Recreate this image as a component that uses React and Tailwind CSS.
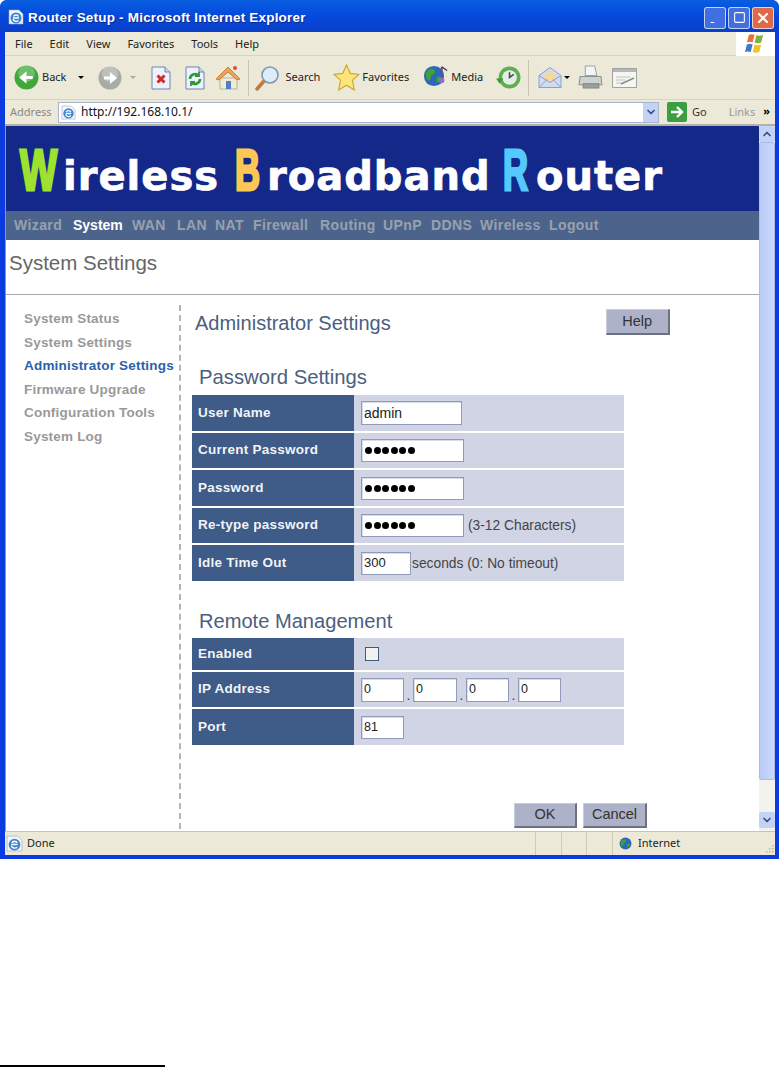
import { ChevronUp, ChevronDown, Minus, Square, X } from 'lucide-react';

const sideLinks = ['System Status', 'System Settings', 'Administrator Settings', 'Firmware Upgrade', 'Configuration Tools', 'System Log'];
const navLinks = [
  ['Wizard', 'w-[59px]'],
  ['System', 'w-[59px]'],
  ['WAN', 'w-[45px]'],
  ['LAN', 'w-[38px]'],
  ['NAT', 'w-[38px]'],
  ['Firewall', 'w-[67px]'],
  ['Routing', 'w-[63px]'],
  ['UPnP', 'w-[48px]'],
  ['DDNS', 'w-[49px]'],
  ['Wireless', 'w-[69px]'],
  ['Logout', 'w-[60px]'],
];

function BackIcon({ disabled }) {
  const fill = disabled ? '#a9aba5' : '#3fa83a';
  const size = disabled ? 'w-[24px] h-[24px]' : 'w-[25px] h-[25px]';
  return (
    <svg viewBox="0 0 24 24" className={size}>
      <circle cx="12" cy="12" r="11.5" fill={fill} />
      <circle cx="12" cy="8" r="8" fill="#fff" opacity="0.25" />
      {disabled ? (
        <path d="M6 10.5h6V6l7 6-7 6v-4.5H6z" fill="#fff" />
      ) : (
        <path d="M18 10.5h-6V6l-7 6 7 6v-4.5h6z" fill="#fff" />
      )}
    </svg>
  );
}

function PageIcon({ refresh }) {
  return (
    <svg viewBox="0 0 20 24" className="w-[20px] h-[24px]">
      <path d="M1 1h13l5 5v17H1z" fill="#eef2fb" stroke="#6c83b5" />
      <path d="M14 1v5h5" fill="#c9d6ee" stroke="#6c83b5" />
      {refresh ? (
        <g fill="none" stroke="#2c9a36" strokeWidth="2.6">
          <path d="M5 13a5 5 0 0 1 8.5-3.5" />
          <path d="M15 13a5 5 0 0 1-8.5 3.5" />
          <path d="M14 6v4h-4M6 20v-4h4" strokeWidth="1.8" />
        </g>
      ) : (
        <path d="M6.5 9.5l7 7m0-7l-7 7" stroke="#d8262a" strokeWidth="3" />
      )}
    </svg>
  );
}

function HomeIcon() {
  return (
    <svg viewBox="0 0 26 26" className="w-[26px] h-[26px]">
      <path d="M5 13h17v11H5z" fill="#f1ead4" stroke="#b9b39a" />
      <path d="M1 14L13 2l12 12-3 1-9-8-9 8z" fill="#e9a35b" stroke="#c87f3a" />
      <path d="M11 16h5v8h-5z" fill="#4f7fc4" />
      <circle cx="20" cy="3" r="2" fill="#d8512f" />
    </svg>
  );
}

function SearchIcon() {
  return (
    <svg viewBox="0 0 26 26" className="w-[26px] h-[26px]">
      <path d="M3 24l7-8" stroke="#c2793a" strokeWidth="3.5" strokeLinecap="round" />
      <circle cx="16" cy="10" r="8" fill="#dcecf8" stroke="#7f97b4" strokeWidth="1.6" />
    </svg>
  );
}

function StarIcon() {
  return (
    <svg viewBox="0 0 26 26" className="w-[27px] h-[27px]">
      <path d="M13 1l3.6 8 8.4 1-6.2 5.6L20.500 25 13 20.500 5.500 25l1.700-9.400L1 10l8.400-1z" fill="#fde57a" stroke="#c9a63a" strokeWidth="1.100" />
    </svg>
  );
}

function GlobeIcon({ className }) {
  return (
    <svg viewBox="0 0 24 24" className={className}>
      <circle cx="12" cy="12" r="11" fill="#2a68b8" />
      <path d="M5 6c3-3 7-2 8 0s-1 4-3 5-1 5-3 6-4-3-4-6 0-3 2-5zM16 13c2-1 5 0 5 1s-3 6-5 5-2-5 0-6z" fill="#3f9f3a" />
    </svg>
  );
}

function MediaIcon() {
  return (
    <div className="relative w-[25px] h-[25px]">
      <GlobeIcon className="w-[22px] h-[22px]" />
      <svg viewBox="0 0 10 20" className="absolute right-0 top-0 w-[9px] h-[20px]">
        <path d="M3 1v13" stroke="#6a4aa0" strokeWidth="2" />
        <path d="M3 1l6 4" stroke="#3a3a50" strokeWidth="1.500" />
        <circle cx="3" cy="16" r="3" fill="#8f70c8" />
      </svg>
    </div>
  );
}

function HistoryIcon() {
  return (
    <svg viewBox="0 0 24 24" className="w-[25px] h-[25px]">
      <circle cx="13" cy="12" r="10.500" fill="#5fae52" />
      <circle cx="13" cy="12" r="7" fill="#e3eee4" />
      <path d="M13 7v5l4-3" stroke="#3c4a40" strokeWidth="1.500" fill="none" />
      <path d="M0 13h7l-3.500 5z" fill="#3a9a3a" />
    </svg>
  );
}

function MailIcon() {
  return (
    <svg viewBox="0 0 24 22" className="w-[24px] h-[23px]">
      <path d="M1 9l11-8 11 8v12H1z" fill="#cfdcf3" stroke="#8aa2c8" />
      <path d="M6 9l6-5 6 5v4l-6 3-6-3z" fill="#f4d99a" />
      <path d="M1 9l11 7 11-7M1 21l8-8m14 8l-8-8" fill="none" stroke="#8aa2c8" />
    </svg>
  );
}

function PrintIcon() {
  return (
    <svg viewBox="0 0 24 24" className="w-[25px] h-[25px]">
      <path d="M7 1h9l2 9H7z" fill="#f3f5f8" stroke="#9aa6b0" />
      <path d="M2 11h20l1 8H1z" fill="#cfd3cf" stroke="#8c938f" />
      <path d="M5 18h15v4H5z" fill="#9ba29d" stroke="#7e8681" />
    </svg>
  );
}

function EditIcon() {
  return (
    <svg viewBox="0 0 25 20" className="w-[25px] h-[20px]">
      <path d="M0.500 0.500h24v19h-24z" fill="#f5f5f2" stroke="#9ea49d" />
      <path d="M1 1h23v3H1z" fill="#b3b8b2" />
      <path d="M4 9h14M4 12h9M4 15h6" stroke="#c0c4bd" />
      <path d="M9 16l13-6" stroke="#888f88" strokeWidth="1.500" />
    </svg>
  );
}

function IeIcon({ className }) {
  return (
    <svg viewBox="0 0 16 16" className={className}>
      <path d="M1 1h10l4 4v10H1z" fill="#f4f6fa" stroke="#9aa7bf" strokeWidth="0.600" />
      <circle cx="8" cy="9" r="5.500" fill="#3d83cf" />
      <path d="M5 9h6M5.500 7.500c1-2 4-2 5 0" fill="none" stroke="#fff" strokeWidth="1.500" />
      <path d="M5 10c.5 2.500 4 3 5.500 1.500" fill="none" stroke="#fff" strokeWidth="1.300" />
    </svg>
  );
}

function XpFlag() {
  return (
    <svg viewBox="0 0 22 22" className="w-[21px] h-[21px]">
      <path d="M4 2c2-1 4-1 6 0l-2 8c-2-1-4-1-6 0z" fill="#e8703a" />
      <path d="M12 2c2 1 4 1 7 0l-2 8c-3 1-5 1-7 0z" fill="#7db53c" />
      <path d="M2 12c2-1 4-1 6 0l-2 8c-2-1-4-1-6 0z" fill="#3f78c9" />
      <path d="M10 12c2 1 4 1 7 0l-2 8c-3 1-5 1-7 0z" fill="#f2c22e" />
    </svg>
  );
}

function GoIcon() {
  return (
    <div className="w-[20px] h-[20px] bg-[#3b9e40] rounded-[2px] flex items-center justify-center">
      <svg viewBox="0 0 16 16" className="w-[16px] h-[16px]">
        <path d="M2 8h11M8 3l5 5-5 5" fill="none" stroke="#fff" strokeWidth="2.400" />
      </svg>
    </div>
  );
}

function Grip() {
  return (
    <svg viewBox="0 0 9 9" className="w-[9px] h-[9px] self-end mb-[2px] mr-[1px]">
      <path d="M7 1h1.500v1.500H7zM4 4h1.500v1.500H4zM7 4h1.500v1.500H7zM1 7h1.500v1.500H1zM4 7h1.500v1.500H4zM7 7h1.500v1.500H7z" fill="#b8b5a2" />
    </svg>
  );
}

function CapLetter({ letter, color, box, scale }) {
  return (
    <span className={`inline-block shrink-0 ${box} ${color}`}>
      <span className={`inline-block origin-left font-['Liberation_Sans',sans-serif] font-bold text-[58px] leading-[58px] [-webkit-text-stroke:3px_currentColor] ${scale}`}>{letter}</span>
    </span>
  );
}

function Field({ className, children, text }) {
  return (
    <div className={`bg-white border border-[#8f9bb8] shadow-[inset_1px_1px_0_#d8dce6] flex items-center pl-[2px] text-[#222] font-['Liberation_Sans',sans-serif] ${text || 'text-[14px]'} ${className}`}>
      {children}
    </div>
  );
}

function Dots() {
  return (
    <div className="flex gap-[1.500px] pl-[1px]">
      {[0, 1, 2, 3, 4, 5].map((i) => (
        <span key={i} className="w-[7px] h-[7px] rounded-full bg-black" />
      ))}
    </div>
  );
}

function Row({ label, height, children }) {
  return (
    <div className={`flex ${height}`}>
      <div className="w-[162px] shrink-0 bg-[#3f5c88] flex items-center pl-[6px] text-white/95 font-bold text-[13.500px] tracking-[0.250px] font-['Liberation_Sans',sans-serif]">
        {label}
      </div>
      <div className="flex-1 bg-[#d0d4e5] flex items-center pl-[7px] text-[#444] text-[13.800px] font-['Liberation_Sans',sans-serif]">
        {children}
      </div>
    </div>
  );
}

function GrayButton({ children, className }) {
  return (
    <div className={`bg-[#aeb2c8] border-t border-l border-[#c9ccd8] border-r-2 border-b-2 border-r-[#6e7280] border-b-[#6e7280] flex items-center justify-center text-[14.500px] text-[#333] font-['Liberation_Sans',sans-serif] ${className}`}>
      {children}
    </div>
  );
}

export default function App() {
  return (
    <div className="w-[782px] h-[1067px] bg-white relative overflow-hidden">
      <div className="w-[779px] h-[859px] bg-[#0b3be0] rounded-t-[7px] flex flex-col font-['Noto_Sans',sans-serif] text-[11px] text-black">
        {/* title bar */}
        <div className="h-[32px] shrink-0 rounded-t-[7px] bg-gradient-to-b from-[#0a5fe0] via-[#0548dc] to-[#0a3fc8] flex items-center pl-[8px] pr-[5px] gap-[4px]">
          <IeIcon className="w-[16px] h-[16px] mt-[2px]" />
          <span className="mt-[4px] text-white font-bold text-[13.500px] tracking-[0.200px] [text-shadow:1px_1px_0_#0a2a90] font-['Liberation_Sans',sans-serif]">Router Setup - Microsoft Internet Explorer</span>
          <div className="ml-auto flex gap-[2px] mt-[3px]">
            <div className="w-[22px] h-[22px] rounded-[3px] border border-white/70 bg-[#3f6fe0] flex items-end justify-start p-[3px]">
              <Minus className="w-[9px] h-[5px] text-white" strokeWidth={5} />
            </div>
            <div className="w-[22px] h-[22px] rounded-[3px] border border-white/70 bg-[#3f6fe0] flex items-center justify-center">
              <Square className="w-[13px] h-[13px] text-white" strokeWidth={2} />
            </div>
            <div className="w-[22px] h-[22px] rounded-[3px] border border-white/70 bg-[#dc6a48] flex items-center justify-center">
              <X className="w-[16px] h-[16px] text-white" strokeWidth={3} />
            </div>
          </div>
        </div>

        <div className="flex-1 ml-[5px] mr-[4px] mb-[4px] flex flex-col bg-[#ece9d8] min-h-0">
          {/* menu bar */}
          <div className="h-[24px] shrink-0 flex items-center border-b border-[#d8d4c0] relative">
            <div className="flex items-center pl-[10px] gap-[17px] text-[#222] pt-[1px]">
              <span>File</span>
              <span>Edit</span>
              <span>View</span>
              <span>Favorites</span>
              <span>Tools</span>
              <span>Help</span>
            </div>
            <div className="ml-auto w-[39px] h-[24px] bg-white flex items-center justify-center">
              <XpFlag />
            </div>
          </div>

          {/* toolbar */}
          <div className="h-[44px] shrink-0 flex items-center pl-[9px] border-b border-[#d8d4c0] text-[#222]">
            <BackIcon />
            <span className="ml-[3px]">Back</span>
            <span className="ml-[12px] w-0 h-0 border-x-[3px] border-x-transparent border-t-[3px] border-t-black" />
            <span className="ml-[14px]"><BackIcon disabled /></span>
            <span className="ml-[8px] w-0 h-0 border-x-[3px] border-x-transparent border-t-[3px] border-t-[#aaa]" />
            <span className="ml-[15px]"><PageIcon /></span>
            <span className="ml-[14px]"><PageIcon refresh /></span>
            <span className="ml-[10px]"><HomeIcon /></span>
            <span className="ml-[7px] w-px h-[36px] bg-[#c8c4b0]" />
            <span className="ml-[5px]"><SearchIcon /></span>
            <span className="ml-[5px]">Search</span>
            <span className="ml-[13px]"><StarIcon /></span>
            <span className="ml-[2px]">Favorites</span>
            <span className="ml-[14px]"><MediaIcon /></span>
            <span className="ml-[3px]">Media</span>
            <span className="ml-[13px]"><HistoryIcon /></span>
            <span className="ml-[7px] w-px h-[36px] bg-[#c8c4b0]" />
            <span className="ml-[9px]"><MailIcon /></span>
            <span className="ml-[2px] w-0 h-0 border-x-[3px] border-x-transparent border-t-[3px] border-t-black" />
            <span className="ml-[8px]"><PrintIcon /></span>
            <span className="ml-[9px]"><EditIcon /></span>
          </div>

          {/* address bar */}
          <div className="h-[26px] shrink-0 flex items-center pl-[5px] border-b-2 border-[#b5b2a4]">
            <span className="text-[#888] w-[48px]">Address</span>
            <div className="w-[601px] h-[21px] bg-white border border-[#a7b4cc] flex items-center pl-[2px]">
              <IeIcon className="w-[15px] h-[15px]" />
              <span className="ml-[5px] text-[#111] text-[12px]">http://192.168.10.1/</span>
              <div className="ml-auto w-[15px] h-[19px] bg-[#c3d2f5] flex items-center justify-center">
                <ChevronDown className="w-[12px] h-[12px] text-[#3a4f86]" strokeWidth={3.500} />
              </div>
            </div>
            <span className="ml-[8px]"><GoIcon /></span>
            <span className="ml-[5px] text-[#333]">Go</span>
            <span className="ml-[22px] text-[#999]">Links</span>
            <span className="ml-[8px] font-bold text-[11px] leading-[11px] mb-[4px]">»</span>
          </div>

          {/* page and scrollbar */}
          <div className="flex-1 flex min-h-0">
            <div className="flex-1 bg-white flex flex-col border-l border-[#999]">
              {/* banner */}
              <div className="h-[85px] shrink-0 bg-[#14288a] flex items-baseline pl-[14px] pt-[15px] text-white font-['DejaVu_Sans',sans-serif] font-bold text-[40px] leading-[62px] tracking-[1px] [-webkit-text-stroke:0.7px_currentColor]">
                <CapLetter letter="W" color="text-[#9ce22e]" box="w-[43px]" scale="scale-x-[0.68]" />
                <span className="w-[172px] shrink-0">ireless</span>
                <CapLetter letter="B" color="text-[#fdc755]" box="w-[32px]" scale="scale-x-[0.6]" />
                <span className="w-[236px] shrink-0">roadband</span>
                <CapLetter letter="R" color="text-[#55c8fd]" box="w-[33px]" scale="scale-x-[0.6]" />
                <span>outer</span>
              </div>

              {/* nav */}
              <div className="h-[29px] shrink-0 bg-[#4c648c] flex items-center pl-[8px] text-[#9aa0ac] font-bold text-[14px] tracking-[0.400px] font-['Liberation_Sans',sans-serif]">
                {navLinks.map(([name, width]) => (
                  <span key={name} className={`${width} shrink-0 ${name === 'System' ? 'text-white tracking-normal' : ''}`}>{name}</span>
                ))}
              </div>

              {/* page title */}
              <div className="h-[55px] shrink-0 border-b border-[#aaa] flex items-center pl-[3px] pb-[7px] text-[#666] text-[20.500px] font-['Liberation_Sans',sans-serif]">
                System Settings
              </div>

              {/* body */}
              <div className="flex-1 flex min-h-0">
                <div className="w-[173px] shrink-0 pl-[18px] pt-[12px] pb-[2px] font-bold text-[13.500px] tracking-[0.200px] leading-[23.600px] text-[#999] font-['Liberation_Sans',sans-serif] whitespace-nowrap">
                  {sideLinks.map((item) => (
                    <div key={item} className={item === 'Administrator Settings' ? 'text-[#2a62ac]' : ''}>{item}</div>
                  ))}
                </div>
                <div className="mt-[10px] mb-[2px] border-l-2 border-dashed border-[#b5b5b5]" />
                <div className="flex-1 flex flex-col pl-[11px] font-['Liberation_Sans',sans-serif]">
                  <div className="h-[53px] shrink-0 flex items-start pt-[14px]">
                    <span className="pl-[3px] text-[20px] leading-[28px] text-[#4a6080]">Administrator Settings</span>
                    <GrayButton className="ml-[215px] w-[64px] h-[26px]">Help</GrayButton>
                  </div>
                  <div className="h-[47px] shrink-0 pl-[7px] pt-[16px] text-[20.300px] leading-[26px] text-[#4a6080]">Password Settings</div>
                  <div className="w-[432px] flex flex-col gap-[2px]">
                    <Row label="User Name" height="h-[36px]">
                      <Field className="w-[101px] h-[24px]">admin</Field>
                    </Row>
                    <Row label="Current Password" height="h-[35px]">
                      <Field className="w-[103px] h-[23px]"><Dots /></Field>
                    </Row>
                    <Row label="Password" height="h-[36px]">
                      <Field className="w-[103px] h-[23px]"><Dots /></Field>
                    </Row>
                    <Row label="Re-type password" height="h-[35px]">
                      <Field className="w-[103px] h-[23px]"><Dots /></Field>
                      <span className="ml-[4px] mt-[2px]">(3-12 Characters)</span>
                    </Row>
                    <Row label="Idle Time Out" height="h-[36px]">
                      <Field className="w-[50px] h-[23px]" text="text-[13px]">300</Field>
                      <span className="ml-[1px] mt-[2px]">seconds (0: No timeout)</span>
                    </Row>
                  </div>
                  <div className="h-[57px] shrink-0 pl-[7px] pt-[27px] text-[20.100px] leading-[26px] text-[#4a6080]">Remote Management</div>
                  <div className="w-[432px] flex flex-col gap-[2px]">
                    <Row label="Enabled" height="h-[32px]">
                      <div className="ml-[4px] w-[14px] h-[14px] bg-[#f2f2ee] border border-[#3f5c80]" />
                    </Row>
                    <Row label="IP Address" height="h-[35px]">
                      <div className="flex items-end">
                        <Field className="w-[43px] h-[24px]" text="text-[12.500px]">0</Field>
                        <span className="w-[9px] text-center leading-[12px]">.</span>
                        <Field className="w-[44px] h-[24px]" text="text-[12.500px]">0</Field>
                        <span className="w-[9px] text-center leading-[12px]">.</span>
                        <Field className="w-[43px] h-[24px]" text="text-[12.500px]">0</Field>
                        <span className="w-[9px] text-center leading-[12px]">.</span>
                        <Field className="w-[43px] h-[24px]" text="text-[12.500px]">0</Field>
                      </div>
                    </Row>
                    <Row label="Port" height="h-[36px]">
                      <Field className="w-[43px] h-[23px]" text="text-[12.500px]">81</Field>
                    </Row>
                  </div>
                  <div className="flex-1 flex items-end gap-[6px] pb-[3px] pl-[322px]">
                    <GrayButton className="w-[63px] h-[25px]">OK</GrayButton>
                    <GrayButton className="w-[64px] h-[25px]">Cancel</GrayButton>
                  </div>
                </div>
              </div>
            </div>

            {/* scrollbar */}
            <div className="w-[16px] shrink-0 bg-[#f2f3ec] flex flex-col">
              <div className="h-[16px] shrink-0 bg-[#c3d2f5] rounded-[2px] flex items-center justify-center">
                <ChevronUp className="w-[12px] h-[12px] text-[#3a4f86]" strokeWidth={3.500} />
              </div>
              <div className="h-[638px] shrink-0 bg-gradient-to-r from-[#b9cbf7] to-[#cbd9fb] border border-[#a9bdec] rounded-[2px]" />
              <div className="flex-1" />
              <div className="h-[16px] mb-[3px] shrink-0 bg-[#c3d2f5] rounded-[2px] flex items-center justify-center">
                <ChevronDown className="w-[12px] h-[12px] text-[#3a4f86]" strokeWidth={3.500} />
              </div>
            </div>
          </div>

          {/* status bar */}
          <div className="h-[24px] shrink-0 bg-[#ece9d8] border-t border-[#c8c4b0] flex items-center pl-[1px] text-[#222]">
            <IeIcon className="w-[17px] h-[17px]" />
            <span className="ml-[4px]">Done</span>
            <div className="ml-auto flex h-full">
              <div className="w-[26px] border-l border-[#cfcbb8]" />
              <div className="w-[25px] border-l border-[#cfcbb8]" />
              <div className="w-[26px] border-l border-[#cfcbb8]" />
              <div className="w-[163px] border-l border-[#cfcbb8] flex items-center pl-[6px]">
                <GlobeIcon className="w-[13px] h-[13px]" />
                <span className="ml-[6px]">Internet</span>
                <span className="ml-auto flex h-full"><Grip /></span>
              </div>
            </div>
          </div>
        </div>
      </div>

      {/* footnote rule */}
      <div className="absolute left-0 bottom-0 w-[165px] h-[2px] bg-black" />
    </div>
  );
}
